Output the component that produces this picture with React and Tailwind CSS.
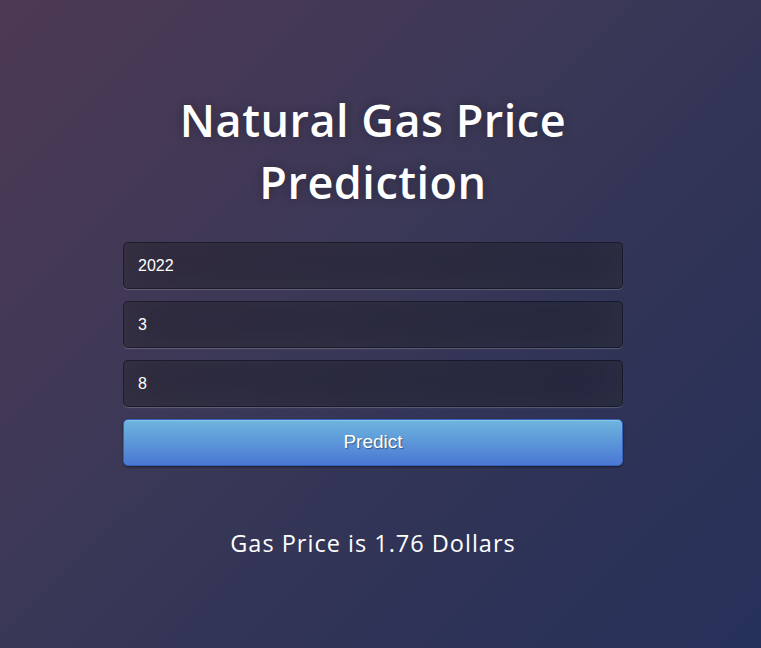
import { useState } from 'react'

export default function App() {
  const [year, setYear] = useState('2022')
  const [month, setMonth] = useState('3')
  const [day, setDay] = useState('8')

  return (
    <div className="min-h-screen w-full bg-[linear-gradient(135deg,#4d3954_0%,#3a3857_45%,#2f3356_70%,#26315a_100%)] font-['Open_Sans',sans-serif]">
      <div className="ml-[123px] flex w-[500px] flex-col items-center pt-[89px]">
        <h1 className="text-center text-[45px] font-semibold leading-[62px] tracking-[0.5px] text-white [text-shadow:0_0_10px_rgba(0,0,0,0.3)]">
          Natural Gas Price
          <br />
          Prediction
        </h1>

        <form className="mt-[29px] flex w-full flex-col gap-3" onSubmit={(e) => e.preventDefault()}>
          {[
            [year, setYear],
            [month, setMonth],
            [day, setDay],
          ].map(([val, set], i) => (
            <input
              key={i}
              value={val}
              onChange={(e) => set(e.target.value)}
              className="h-[47px] w-full rounded-[5px] border border-[rgba(0,0,0,0.3)] bg-[rgba(0,0,0,0.3)] px-[14px] font-['Liberation_Sans',Arial,sans-serif] text-[16px] text-white shadow-[inset_0_-5px_45px_rgba(100,100,100,0.2),0_1px_1px_rgba(255,255,255,0.2)] outline-none"
            />
          ))}
          <button
            type="submit"
            className="h-[47px] w-full rounded-[5px] border border-[#3762bc] bg-[linear-gradient(to_bottom,#6eb6de,#4a77d4)] font-['Liberation_Sans',Arial,sans-serif] text-[19px] text-white shadow-[inset_0_1px_0_rgba(255,255,255,0.2),0_1px_2px_rgba(0,0,0,0.5)] [text-shadow:1px_1px_1px_rgba(0,0,0,0.4)]"
          >
            Predict
          </button>
        </form>

        <p className="mt-[60px] text-[23.5px] tracking-[1px] text-white">Gas Price is 1.76 Dollars</p>
      </div>
    </div>
  )
}
